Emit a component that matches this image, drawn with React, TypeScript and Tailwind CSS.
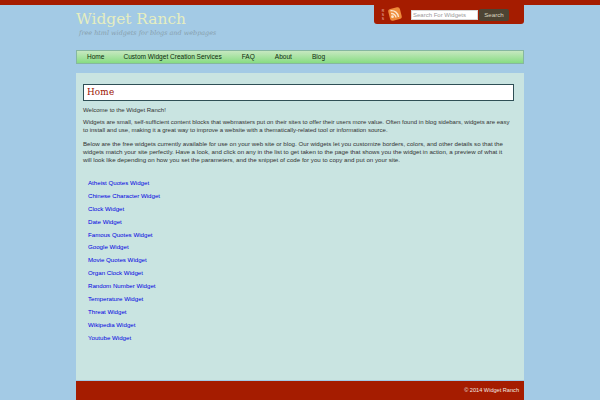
const links = ["Atheist Quotes Widget","Chinese Character Widget","Clock Widget","Date Widget","Famous Quotes Widget","Google Widget","Movie Quotes Widget","Organ Clock Widget","Random Number Widget","Temperature Widget","Threat Widget","Wikipedia Widget","Youtube Widget"];
const nav = [["Home","ml-[10px]"],["Custom Widget Creation Services","ml-[19px]"],["FAQ","ml-[20px]"],["About","ml-[20px]"],["Blog","ml-[20px]"]];

export default function App() {
  return (
    <div className="w-[600px] h-[400px] overflow-hidden bg-[#a3cae5] font-['Liberation_Sans',Arial,sans-serif] text-[6.03px] leading-[10px] text-[#333]">
      <div className="h-[5px] bg-[#a51c00]" />
      <div className="w-[448px] ml-[76px]">
        <div className="flex justify-between h-[45px]">
          <div>
            <div className="font-['DejaVu_Serif',serif] text-[15.4px] leading-[20px] mt-[4px] text-[#e6eec0]">Widget Ranch</div>
            <div className="font-['DejaVu_Serif',serif] italic text-[6.45px] leading-[10px] ml-[3px] mt-[-1px] text-[#87a0ad]">free html widgets for blogs and webpages</div>
          </div>
          <div className="w-[150px] h-[19px] bg-[#a51c00] rounded-b-[3px] flex items-center">
            <div className="ml-[7px] w-[4px] flex flex-col items-center text-[3.5px] leading-[4px] text-[#f3c8b8]"><span>R</span><span>S</span><span>S</span></div>
            <svg width="16" height="16" viewBox="0 0 16 16" className="ml-[2px] mt-[-2px]">
              <rect x="2" y="2" width="12" height="12" rx="2.5" fill="#ee8a3a" transform="rotate(-14 8 8)" />
              <circle cx="5.5" cy="10.7" r="1.4" fill="#fde6cc" />
              <path d="M4 7.5a4.5 4.5 0 0 1 5 4M3.5 4.7a7 7 0 0 1 8 6.3" fill="none" stroke="#fde6cc" strokeWidth="1.4" />
            </svg>
            <div className="ml-[8px] w-[67px] h-[10px] bg-white border border-[#d8d8d8] text-[#999] text-[6px] leading-[8px] pl-[1px] overflow-hidden">Search For Widgets</div>
            <div className="ml-[1px] w-[30px] h-[12px] rounded-[2px] bg-[#4d4433] text-[#dcd8c0] text-[6.15px] leading-[12px] text-center">Search</div>
          </div>
        </div>
        <div className="h-[14px] flex items-center border border-[#86b7a0] bg-gradient-to-b from-[#c6e8c0] to-[#86dc82] text-[#0c2a0c] text-[6.55px]">
          {nav.map(([t,c]) => <span key={t} className={c}>{t}</span>)}
        </div>
        <div className="mt-[9px] h-[307px] bg-[#c9e4e1] pl-[7px] pr-[10px] pt-[11px]">
          <div className="h-[17px] bg-white border border-[#2f4f55] font-['DejaVu_Serif',serif] tracking-[0.2px] text-[8.8px] leading-[15px] pl-[3px] text-[#9a1000]">Home</div>
          <p className="mt-[4px]">Welcome to the Widget Ranch!</p>
          <p className="mt-[3px] mr-[2px] leading-[8px]">Widgets are small, self-sufficient content blocks that webmasters put on their sites to offer their users more value. Often found in blog sidebars, widgets are easy to install and use, making it a great way to improve a website with a thematically-related tool or information source.</p>
          <p className="mt-[6px] mr-[2px] leading-[8px] text-[6.18px]">Below are the free widgets currently available for use on your web site or blog. Our widgets let you customize borders, colors, and other details so that the widgets match your site perfectly. Have a look, and click on any in the list to get taken to the page that shows you the widget in action, a preview of what it will look like depending on how you set the parameters, and the snippet of code for you to copy and put on your site.</p>
          <ul className="mt-[14px] ml-[5px] flex flex-col gap-[2.9px] text-[6.15px] text-[#0000e0]">
            {links.map(l => <li key={l}>{l}</li>)}
          </ul>
        </div>
        <div className="mt-px h-[19px] bg-[#a51c00] text-[#f0e8e0] text-[5.6px] text-right pr-[5px] pt-[4px]">© 2014 Widget Ranch</div>
      </div>
    </div>
  );
}
